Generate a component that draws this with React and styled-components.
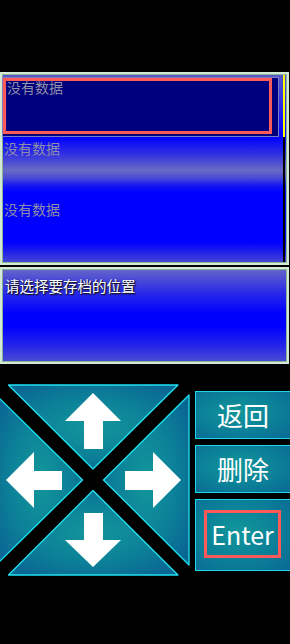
import React from "react";
import styled, { createGlobalStyle } from "styled-components";

const Global = createGlobalStyle`
  html, body { margin: 0; padding: 0; background: #000; }
  body { width: 290px; height: 644px; overflow: hidden; font-family: "Noto Sans CJK SC", "Noto Sans", sans-serif; }
  #root { width: 290px; height: 644px; }
`;

const Screen = styled.div`
  display: flex;
  flex-direction: column;
  width: 290px;
  height: 644px;
  padding-top: 72px;
  box-sizing: border-box;
  background: #000;
`;

const Window = styled.div`
  box-sizing: border-box;
  width: 289px;
  height: ${(p) => p.$h}px;
  border: 2px solid #d4ead6;
  box-shadow: inset 0 0 0 1px #86b494;
  background: ${(p) => p.$bg};
`;

const ListWindow = styled(Window)`
  display: flex;
  flex-direction: row;
`;

const SlotList = styled.div`
  flex: 1;
  display: flex;
  flex-direction: column;
  padding-top: 3px;
`;

const Slot = styled.div`
  box-sizing: border-box;
  height: ${(p) => (p.$selected ? 60 : 61)}px;
  width: 277px;
  margin-bottom: ${(p) => (p.$selected ? 1 : 0)}px;
  border: 1px solid ${(p) => (p.$selected ? "#7c7cc0" : "transparent")};
  background: ${(p) => (p.$selected ? "#00007e" : "transparent")};
`;

const SlotLabel = styled.div`
  box-sizing: border-box;
  width: 269px;
  height: 56px;
  border: 3px solid ${(p) => (p.$marked ? "#ff5a5a" : "transparent")};
  margin-left: ${(p) => (p.$marked ? 0 : -3)}px;
  padding-left: 1px;
  font-size: 14px;
  line-height: 12px;
  color: #8e8ea6;
  white-space: nowrap;
`;

const ScrollTrack = styled.div`
  width: 2px;
  margin: 1px 2px 1px 0;
  background: #000;
  display: flex;
  flex-direction: column;
`;

const ScrollThumb = styled.div`
  height: 62px;
  background: #ffff00;
`;

const Gap = styled.div`
  height: ${(p) => p.$h}px;
  flex: none;
`;

const Message = styled.div`
  padding: 8px 0 0 3px;
  font-size: 14.5px;
  line-height: 18px;
  color: #fff;
  text-shadow: 1px 1px 0 #1a1a3a, 1px 1px 2px #000;
  white-space: nowrap;
`;

const Controls = styled.div`
  display: flex;
  flex-direction: row;
  align-items: flex-start;
  margin-top: 19px;
`;

const PadSvg = styled.svg`
  display: block;
  width: 190px;
  height: 194px;
  flex: none;
`;

const ButtonColumn = styled.div`
  display: flex;
  flex-direction: column;
  margin-left: 5px;
  padding-top: 8px;
  gap: 6px;
`;

const ActionButton = styled.div`
  box-sizing: border-box;
  width: 97px;
  height: ${(p) => p.$h}px;
  border: 1px solid #19d9ea;
  background: radial-gradient(ellipse at 45% 45%, #11979a 0%, #0b7f98 55%, #0a6894 100%);
  display: flex;
  align-items: center;
  justify-content: center;
  color: #fff;
  font-size: ${(p) => p.$fs}px;
  line-height: 1;
  padding-right: 1px;
`;

const ButtonLabel = styled.span`
  box-sizing: border-box;
  display: flex;
  align-items: center;
  justify-content: center;
  ${(p) =>
    p.$marked
      ? `width: 77px; height: 48px; border: 3px solid #ff5a5a; margin-left: -1px; margin-top: -2px;`
      : ``}
`;

const listBg = `linear-gradient(180deg,
  #5a5ac8 0px,
  #2020ea 40px,
  #0000ff 63px,
  #2a2ae6 78px,
  #4c4cd2 88px,
  #6a6ac6 96px,
  #4a4ad6 104px,
  #1414f4 112px,
  #0000ff 118px,
  #0000ff 168px,
  #2020e8 178px,
  #4a4ad2 189px)`;

const msgBg = `linear-gradient(180deg, #6666c8 0%, #2a2ae8 25%, #0000ff 48%, #0000ff 62%, #2424ea 82%, #4c4cd4 100%)`;

function DPad() {
  const tri = {
    up: "8.5,385 178,385 93,469",
    down: "8.5,575 178,575 93,490.5",
    left: "-4,395 -4,565 82.5,480",
    right: "189,395 189,565 103.5,480",
  };
  const arrows = [
    "93,393 121,421 103,421 103,449 84,449 84,421 65,421",
    "93,567 121,540 103,540 103,513 84,513 84,540 65,540",
    "6,480 34,452 34,471 62,471 62,490 34,490 34,508",
    "181,480 153,452 153,471 125,471 125,490 153,490 153,508",
  ];
  return (
    <PadSvg viewBox="0 383 190 194" xmlns="http://www.w3.org/2000/svg">
      <defs>
        <radialGradient id="padg" cx="0.5" cy="0.5" r="0.62">
          <stop offset="0" stopColor="#12979b" />
          <stop offset="0.55" stopColor="#0c8198" />
          <stop offset="1" stopColor="#0a6794" />
        </radialGradient>
      </defs>
      {Object.entries(tri).map(([k, pts]) => (
        <polygon
          key={k}
          points={pts}
          fill="url(#padg)"
          stroke="#1ee4f2"
          strokeWidth="1.3"
          strokeLinejoin="round"
        />
      ))}
      {arrows.map((pts, i) => (
        <polygon key={i} points={pts} fill="#fff" />
      ))}
    </PadSvg>
  );
}

export default function App() {
  return (
    <>
      <Global />
      <Screen>
        <ListWindow $h={193} $bg={listBg}>
          <SlotList>
            <Slot $selected>
              <SlotLabel $marked>没有数据</SlotLabel>
            </Slot>
            <Slot>
              <SlotLabel>没有数据</SlotLabel>
            </Slot>
            <Slot>
              <SlotLabel>没有数据</SlotLabel>
            </Slot>
          </SlotList>
          <ScrollTrack>
            <ScrollThumb />
          </ScrollTrack>
        </ListWindow>
        <Gap $h={2} />
        <Window $h={97} $bg={msgBg}>
          <Message>请选择要存档的位置</Message>
        </Window>
        <Controls>
          <DPad />
          <ButtonColumn>
            <ActionButton $h={48} $fs={26}>
              <ButtonLabel>返回</ButtonLabel>
            </ActionButton>
            <ActionButton $h={48} $fs={26}>
              <ButtonLabel>删除</ButtonLabel>
            </ActionButton>
            <ActionButton $h={72} $fs={25}>
              <ButtonLabel $marked>Enter</ButtonLabel>
            </ActionButton>
          </ButtonColumn>
        </Controls>
      </Screen>
    </>
  );
}
